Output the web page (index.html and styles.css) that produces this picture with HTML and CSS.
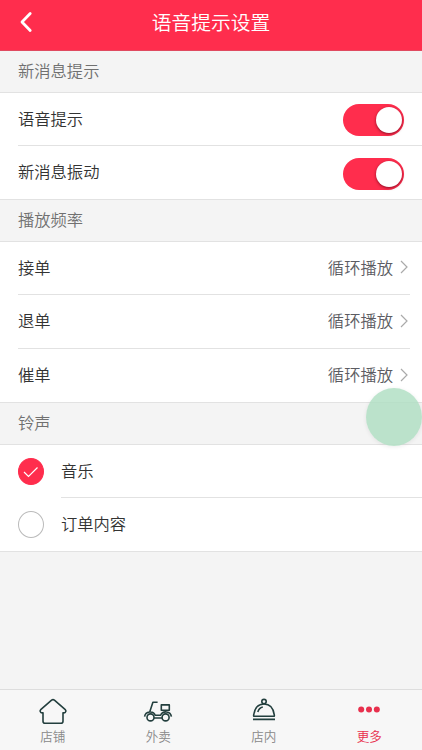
FILE: index.html
```html
<!DOCTYPE html>
<html lang="zh-CN">
<head>
  <meta charset="UTF-8">
  <title>语音提示设置</title>
  <meta name="viewport" content="width=device-width, initial-scale=1">
  <link rel="stylesheet" href="styles.css">
</head>
<body>

  <!-- Header -->
  <header class="header">
    <svg class="back" width="14" height="22" viewBox="0 0 14 22"><path d="M11.2 2.5L3 11L11.2 19.5"/></svg>
    <h1>语音提示设置</h1>
  </header>

  <main class="content">
    <!-- Message alerts -->
    <h2>新消息提示</h2>
    <ul class="list">
      <li class="row"><span>语音提示</span><span class="switch"></span></li>
      <li class="row"><span>新消息振动</span><span class="switch"></span></li>
    </ul>

    <!-- Play frequency -->
    <h2>播放频率</h2>
    <ul class="list inset">
      <li class="row">
        <span>接单</span><span class="value">循环播放</span>
        <svg class="arrow" width="8" height="14" viewBox="0 0 8 14"><path d="M1 1L7 7L1 13"/></svg>
      </li>
      <li class="row">
        <span>退单</span><span class="value">循环播放</span>
        <svg class="arrow" width="8" height="14" viewBox="0 0 8 14"><path d="M1 1L7 7L1 13"/></svg>
      </li>
      <li class="row">
        <span>催单</span><span class="value">循环播放</span>
        <svg class="arrow" width="8" height="14" viewBox="0 0 8 14"><path d="M1 1L7 7L1 13"/></svg>
      </li>
    </ul>

    <!-- Ringtone -->
    <h2>铃声</h2>
    <ul class="list">
      <li class="option">
        <span class="radio checked"><svg width="16" height="12" viewBox="0 0 16 12"><path d="M1 6L5.5 10.5L14.5 1.5"/></svg></span>
        <span class="row">音乐</span>
      </li>
      <li class="option">
        <span class="radio"></span>
        <span class="row">订单内容</span>
      </li>
    </ul>
  </main>

  <!-- Tab bar -->
  <nav class="tabs">
    <a class="tab">
      <svg width="30" height="28" viewBox="0 0 30 28">
        <path d="M13.6 2.2Q15 1.1 16.4 2.2L27.3 11.6Q28.6 12.9 27.3 14.3Q26.4 15 25 14.8V23.3Q25 25.3 23 25.3H7Q5 25.3 5 23.3V14.8Q3.6 15 2.7 14.3Q1.4 12.9 2.7 11.6Z"/>
      </svg>
      <span>店铺</span>
    </a>
    <a class="tab">
      <svg width="30" height="28" viewBox="0 0 30 28">
        <path d="M14.6 4.2H9.9L6.8 13.8M1.6 18.6C2.4 13 10.6 12.4 12.2 17.2H17.6C19.6 12.4 27.6 12.8 28.4 18.6M11 20H19"/>
        <rect x="18.3" y="6.9" width="8" height="5.4"/>
        <circle cx="7.5" cy="19.4" r="3.5"/>
        <circle cx="22.6" cy="19.4" r="3.5"/>
      </svg>
      <span>外卖</span>
    </a>
    <a class="tab">
      <svg width="30" height="28" viewBox="0 0 30 28">
        <circle cx="15" cy="3.6" r="2.2"/>
        <path d="M5.2 18.3Q4.4 18.3 4.7 16.8C5.7 9.8 9.7 6 15 6S24.3 9.8 25.3 16.8Q25.6 18.3 24.8 18.3Z"/>
        <path d="M8.8 14Q10 9.8 13.8 9M4 21.4H26"/>
      </svg>
      <span>店内</span>
    </a>
    <a class="tab active">
      <svg class="dots" width="30" height="28" viewBox="0 0 30 28">
        <circle cx="7.2" cy="11.6" r="3"/>
        <circle cx="15" cy="11.6" r="3"/>
        <circle cx="22.8" cy="11.6" r="3"/>
      </svg>
      <span>更多</span>
    </a>
  </nav>

  <!-- Floating touch button -->
  <div class="touch"></div>

</body>
</html>
```
FILE: styles.css
```css
* { box-sizing: border-box; margin: 0; padding: 0; }
body {
  position: relative; display: flex; flex-direction: column; height: 750px; overflow: hidden;
  background: #f4f4f4; color: #333;
  font-family: "Noto Sans CJK SC", sans-serif; font-size: 16.3px; font-weight: 350;
}
svg { fill: none; flex: none; }

/* Header */
.header {
  display: flex; align-items: center; height: 51px; padding: 0 19px 6px;
  background: #ff2d4d; border-bottom: 1px solid #e04a60; color: #fff;
}
.header h1 { flex: 1; margin-right: 14px; text-align: center; font-size: 19.8px; font-weight: 350; line-height: 30px; }
.back { stroke: #fff; stroke-width: 2.8; stroke-linecap: round; stroke-linejoin: round; }

/* Lists */
.content { flex: 1; }
.content h2 { height: 42px; padding-left: 18px; line-height: 38px; font-size: 16.3px; font-weight: 350; color: #707070; border-bottom: 1px solid #e2e2e2; }
.list { list-style: none; padding-left: 18px; background: #fff; border-bottom: 1px solid #e2e2e2; }
.row { display: flex; align-items: center; height: 53px; padding: 0 18px 3px 0; }
.list > .row:not(:last-child) { border-bottom: 1px solid #e2e2e2; }
.inset { padding-right: 12px; }
.inset .row { padding-right: 2px; }
.inset .row:nth-child(2) { height: 54px; }
.value { margin-left: auto; margin-right: 7px; color: #5c5c62; }
.arrow { stroke: #aaa; stroke-width: 1.2; margin-top: 1px; }

/* Switch */
.switch {
  display: flex; justify-content: flex-end; width: 61px; height: 32px; margin: 5px 0 0 auto; padding: 3px 2px;
  background: #ff2d4d; border-radius: 16px;
}
.switch::after { content: ""; width: 26px; height: 26px; border-radius: 50%; background: #fff; box-shadow: 0 1px 3px rgba(90,0,20,0.7); }

/* Radio options */
.option { display: flex; align-items: center; }
.option .row { flex: 1; margin-left: 17px; }
.option:first-child .row { border-bottom: 1px solid #e2e2e2; }
.radio { display: flex; align-items: center; justify-content: center; width: 26px; height: 27px; border: 1px solid #bbb; border-radius: 50%; }
.radio.checked { background: #ff2d4d; border-color: #ff2d4d; }
.radio path { stroke: #fff; stroke-width: 1.2; }

/* Tab bar */
.tabs { display: flex; height: 61px; background: #f7f7f7; border-top: 1px solid #ddd; }
.tab { flex: 1; display: flex; flex-direction: column; align-items: center; padding-top: 8px; color: #888; font-size: 12.6px; line-height: 20px; }
.tab svg { stroke: #233f3e; stroke-width: 1.6; stroke-linejoin: round; }
.tab.active { color: #e8304d; }
.tab .dots { fill: #e8304d; stroke: none; }

/* Floating touch button */
.touch {
  position: absolute; left: 366px; top: 388px; width: 56px; height: 58px; border-radius: 50%;
  background: rgba(174,222,194,0.82); box-shadow: 0 1px 4px rgba(0,0,0,0.08);
}
```
